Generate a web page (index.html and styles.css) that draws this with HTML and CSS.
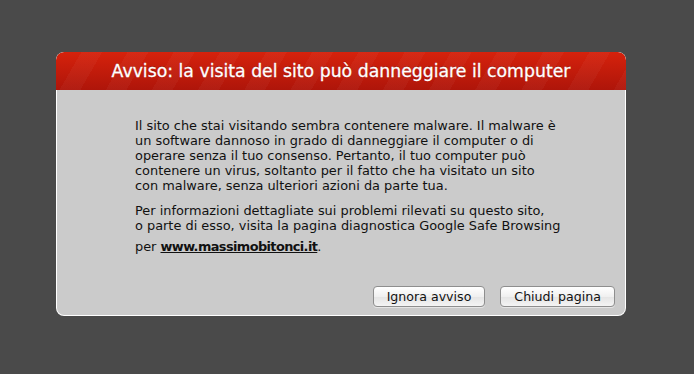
FILE: index.html
```html
<!DOCTYPE html>
<html>
<head>
    <title>Avviso</title>
    <meta name="viewport" content="width=device-width, initial-scale=1.0">
    <link rel="stylesheet" href="styles.css">
</head>
<body>
    <div class="dialog">
        <header class="dialog-head">
            <h1>Avviso: la visita del sito può danneggiare il computer</h1>
        </header>

        <div class="dialog-body">
            <p>Il sito che stai visitando sembra contenere malware. Il malware è<br>
               un software dannoso in grado di danneggiare il computer o di<br>
               operare senza il tuo consenso. Pertanto, il tuo computer può<br>
               contenere un virus, soltanto per il fatto che ha visitato un sito<br>
               con malware, senza ulteriori azioni da parte tua.</p>

            <p>Per informazioni dettagliate sui problemi rilevati su questo sito,<br>
               o parte di esso, visita la pagina diagnostica Google Safe Browsing<br>
               <span class="last">per <a href="#">www.massimobitonci.it</a>.</span></p>

            <div class="actions">
                <button type="button">Ignora avviso</button>
                <button type="button">Chiudi pagina</button>
            </div>
        </div>
    </div>
</body>
</html>
```
FILE: styles.css
```css
body{
  margin: 0;
  background-color: #4a4a4a;
  font-family: "DejaVu Sans", Verdana, sans-serif;
  height: 374px;
  overflow: hidden;
}
.dialog{
  width: 570px;
  height: 264px;
  margin-left: 56px;
  margin-top: 52px;
  display: flex;
  flex-direction: column;
  border-radius: 8px;
  overflow: hidden;
  box-sizing: border-box;
  background: #fff;
  padding: 0 1px 1px 1px;
}
.dialog-head{
  height: 38px;
  margin: 0 -1px;
  display: flex;
  align-items: center;
  justify-content: center;
  background:
    repeating-linear-gradient(120deg, rgba(255,255,255,0) 0 22px, rgba(255,255,255,0.035) 22px 40px),
    linear-gradient(#d6220c, #ae150a);
  border-radius: 8px 8px 0 0;
}
h1{
  margin: 0;
  color: #fff;
  font-size: 17.3px;
  font-weight: normal;
  -webkit-text-stroke: 0.3px #fff;
  text-shadow: 0 -1px 0 rgba(80,0,0,0.4);
}
.dialog-body{
  flex: 1;
  background-color: #cbcbcb;
  border-radius: 0 0 7px 7px;
  padding: 28px 10px 8px 78px;
  display: flex;
  flex-direction: column;
}
p{
  margin: 0 0 10px 0;
  font-size: 12.9px;
  line-height: 15px;
  color: #111;
}
.last{
  display: inline-block;
  margin-top: 6px;
}
a{
  color: #111;
  font-weight: bold;
  letter-spacing: -0.6px;
}
.actions{
  margin-top: auto;
  display: flex;
  justify-content: flex-end;
  gap: 15px;
}
button{
  height: 21px;
  padding: 0 13px;
  font-family: "DejaVu Sans", Verdana, sans-serif;
  font-size: 12.6px;
  color: #111;
  border: 1px solid #8e8e8e;
  border-radius: 4px;
  background: linear-gradient(#ffffff, #f0f0f0 50%, #e4e4e4 51%, #f4f4f4);
  box-shadow: 0 1px 0 rgba(255,255,255,0.5);
}
```
